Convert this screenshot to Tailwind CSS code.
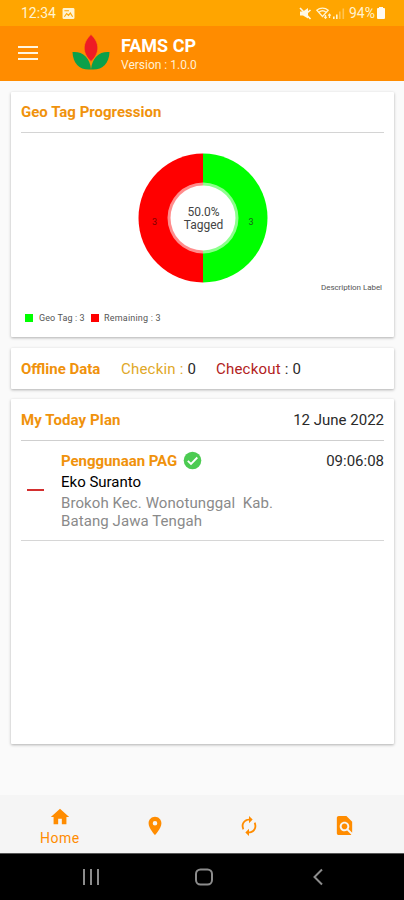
<!DOCTYPE html>
<html lang="en">
<head>
    <meta charset="UTF-8">
    <meta name="viewport" content="width=device-width, initial-scale=1.0">
    <title>FAMS CP</title>
    <script src="https://cdn.jsdelivr.net/npm/@tailwindcss/browser@4"></script>
</head>
<body class="bg-[#fafafa] font-[Roboto,sans-serif] text-[#2a2a2a]">
    <div class="w-[404px] h-[900px] flex flex-col overflow-hidden">
        <!-- Status bar -->
        <div class="h-[26px] shrink-0 bg-[#ffa500] text-[#fff3d0] flex items-center pl-[21px] pr-[19px] text-[14px]">
            <span>12:34</span>
            <svg class="ml-[6px] w-[13px] h-[11px]" viewBox="0 0 13 12" fill="none">
                <rect width="13" height="12" rx="1.5" fill="#fff3d0"/>
                <path d="M2 9.5l2.5-3.5 2 2 2-2.500 2.500 4M2 3h5" stroke="#ffa500" stroke-width="1.200"/>
            </svg>
            <div class="ml-auto flex items-center">
                <svg class="w-[13px] h-[13px]" viewBox="0 0 13 13">
                    <path d="M1 4.500h3l5-3.500v10.500L4 8.500H1z" fill="#fff8e5"/>
                    <path d="M1 1l10.500 11M8.500 5.500l3-2.500" stroke="#fff8e5" stroke-width="1.600"/>
                </svg>
                <svg class="ml-[4px] w-[16px] h-[12px]" viewBox="0 0 16 12" fill="none" stroke="#fff3d0" stroke-width="1.300">
                    <path d="M.8 3.200C4 .3 9 .3 12.200 3.200L6.500 9.500zM3 5.200c2-1.700 5-1.700 7 0M9.500 8v3M8.300 9.800l1.200 1.400 1.200-1.400M13.500 11V7.500M12.300 8.700l1.200-1.400 1.200 1.400"/>
                </svg>
                <svg class="w-[13px] h-[12px]" viewBox="0 0 13 12" fill="#fff3d0">
                    <path d="M1 9.500h1.600V12H1zM4 7.500h1.600V12H4z"/>
                    <path d="M7 4.500h1.600V12H7zM10.500 1.500h1.600V12h-1.600z" opacity=".4"/>
                </svg>
                <span class="ml-[4px]">94%</span>
                <svg class="ml-[2px] w-[8px] h-[12px]" viewBox="0 0 8 12" fill="#fffaf0"><path d="M2 0h4v1H7q1 0 1 1V11q0 1-1 1H1q-1 0-1-1V2q0-1 1-1h1z"/></svg>
            </div>
        </div>

        <!-- App bar -->
        <header class="h-[55px] shrink-0 bg-[#ff8c00] flex items-center text-white">
            <div class="ml-[18px] -mt-[2px] w-[20px] flex flex-col gap-[4px]">
                <span class="h-[2px] bg-[#fff5e0]"></span>
                <span class="h-[2px] bg-[#fff5e0]"></span>
                <span class="h-[2px] bg-[#fff5e0]"></span>
            </div>
            <svg class="ml-[34px] -mt-[3px] w-[38px] h-[36px]" viewBox="0 0 38 36">
                <path d="M.5 18C10 17 18 23 19 35.500C8 36.500 1 30 .5 18z" fill="#0ca04a"/>
                <path d="M37.500 18C28 17 20 23 19 35.500C30 36.500 37 30 37.500 18z" fill="#0ca04a"/>
                <path d="M19 .5C28 9 28 19 19 27.500C10 19 10 9 19 .5z" fill="#ee1c25" stroke="#ff8c00" stroke-width=".6"/>
            </svg>
            <div class="ml-[11px] pt-[2px]">
                <h1 class="text-[18px] leading-[22px] font-bold">FAMS CP</h1>
                <p class="text-[12px] leading-[17px] text-[#fff0d5]">Version : 1.0.0</p>
            </div>
        </header>

        <main class="grow px-[11px] pr-[10px] pt-[11px] flex flex-col gap-[11px]">
            <!-- Progress chart -->
            <section class="h-[245px] bg-white px-[10px] rounded-[1px] shadow-[0_1px_3px_rgba(0,0,0,0.3)]">
                <h2 class="h-[41px] leading-[41px] text-[15px] font-bold text-[#f0920c] border-b border-[#d4d4d4]">Geo Tag Progression</h2>
                <svg class="block mx-auto mt-[20px] w-[130px] h-[130px]" viewBox="0 0 130 130" font-family="Roboto, sans-serif" text-anchor="middle">
                    <path d="M65 .5A64.500 64.500 0 0 0 65 129.500z" fill="#f00"/>
                    <path d="M65 .5A64.500 64.500 0 0 1 65 129.500z" fill="#0f0"/>
                    <circle cx="65" cy="65" r="35.500" fill="#fff" fill-opacity=".55"/>
                    <circle cx="65" cy="65" r="32.500" fill="#fff"/>
                    <text x="65.500" y="62.500" font-size="12" fill="#444">50.0%</text>
                    <text x="65.500" y="76" font-size="12" fill="#444">Tagged</text>
                    <text x="16.500" y="72" font-size="9" fill="#7a0000">3</text>
                    <text x="113" y="72" font-size="9" fill="#186018">3</text>
                </svg>
                <p class="text-right text-[8px] leading-[10px] tracking-[-0.05px] pr-[2px] text-[#555]">Description Label</p>
                <div class="mt-[20px] pl-[4px] flex items-center text-[9px] leading-[10px] text-[#555]">
                    <span class="w-[8px] h-[8px] bg-[#0f0]"></span>
                    <span class="ml-[6px] w-[48px] whitespace-nowrap tracking-[0.1px]">Geo Tag : 3</span>
                    <span class="ml-[4px] w-[8px] h-[8px] bg-[#f00]"></span>
                    <span class="ml-[5px] tracking-[0.2px]">Remaining : 3</span>
                </div>
            </section>

            <section class="h-[41px] pt-[1px] bg-white px-[10px] rounded-[1px] shadow-[0_1px_3px_rgba(0,0,0,0.3)] flex items-center text-[15px]">
                <h2 class="w-[100px] font-bold text-[#f0920c]">Offline Data</h2>
                <p class="w-[95px] tracking-[0.2px]"><span class="text-[#dfa828]">Checkin :</span> 0</p>
                <p class="tracking-[0.2px]"><span class="text-[#b22222]">Checkout</span> : 0</p>
            </section>

            <!-- Today plan -->
            <section class="-mt-[1px] h-[345px] bg-white px-[10px] rounded-[1px] shadow-[0_1px_3px_rgba(0,0,0,0.3)] text-[15px]">
                <div class="h-[42px] pt-[1px] flex items-center justify-between border-b border-[#cfcfcf]">
                    <h2 class="font-bold tracking-[0.1px] text-[#f0920c]">My Today Plan</h2>
                    <span>12 June 2022</span>
                </div>
                <div class="h-[100px] flex items-start border-b border-[#d6d6d6]">
                    <span class="mt-[48px] ml-[6px] w-[17px] h-[2px] bg-[#d32f2f]"></span>
                    <div class="ml-[17px] pt-[9px]">
                        <div class="h-[22px] flex items-center gap-[6px]">
                            <h3 class="font-bold tracking-[-0.05px] text-[#f0920c]">Penggunaan PAG</h3>
                            <svg class="-mt-[2px] w-[19px] h-[19px]" viewBox="0 0 19 19" fill="none">
                                <circle cx="9.500" cy="9.500" r="8.800" fill="#4ccb52"/>
                                <path d="M4.800 9.800l3.200 3.200 6.300-6.500" stroke="#fff" stroke-width="1.800"/>
                            </svg>
                        </div>
                        <p class="leading-[20px] text-black">Eko Suranto</p>
                        <p class="mt-[2px] leading-[18px] tracking-[0.08px] text-[#8a8a8a] whitespace-pre">Brokoh Kec. Wonotunggal  Kab.
Batang Jawa Tengah</p>
                    </div>
                    <span class="ml-auto mt-[9px] leading-[22px]">09:06:08</span>
                </div>
            </section>
        </main>

        <!-- Bottom navigation -->
        <nav class="h-[58px] shrink-0 bg-[#f5f5f5] px-[12.500px] grid grid-cols-4 text-[#ff8c00]">
            <div class="flex flex-col items-center pt-[11px]">
                <svg class="w-[22px] h-[22px]" viewBox="0 0 24 24" fill="currentColor"><path d="M10 20v-6h4v6h5v-8h3L12 3 2 12h3v8z"/></svg>
                <span class="mt-[1px] text-[14px] leading-[18px] tracking-[0.5px]">Home</span>
            </div>
            <div class="flex items-center justify-center pt-[3px]">
                <svg class="w-[22px] h-[22px]" viewBox="0 0 24 24" fill="currentColor"><path d="M12 2C8.130 2 5 5.130 5 9c0 5.250 7 13 7 13s7-7.750 7-13c0-3.870-3.130-7-7-7zm0 9.500a2.500 2.500 0 1 1 0-5 2.500 2.500 0 0 1 0 5z"/></svg>
            </div>
            <div class="flex items-center justify-center pt-[3px]">
                <svg class="w-[22px] h-[22px]" viewBox="0 0 24 24" fill="currentColor"><path d="M12 6v3l4-4-4-4v3c-4.420 0-8 3.580-8 8 0 1.570.46 3.030 1.240 4.260L6.700 14.800c-.45-.83-.7-1.790-.7-2.800 0-3.310 2.690-6 6-6zm6.760 1.740L17.300 9.200c.44.84.7 1.790.7 2.800 0 3.310-2.690 6-6 6v-3l-4 4 4 4v-3c4.420 0 8-3.580 8-8 0-1.570-.46-3.030-1.240-4.260z"/></svg>
            </div>
            <div class="flex items-center justify-center pt-[3px]">
                <svg class="w-[23px] h-[23px]" viewBox="0 0 24 24" fill="currentColor"><path d="M20 19.590V8l-6-6H6c-1.100 0-1.990.9-1.990 2L4 20c0 1.100.89 2 1.990 2H18c.45 0 .85-.15 1.190-.4l-4.430-4.430c-.8.52-1.740.83-2.760.83-2.760 0-5-2.240-5-5s2.240-5 5-5 5 2.240 5 5c0 1.020-.31 1.960-.83 2.750L20 19.590zM9 13c0 1.660 1.340 3 3 3s3-1.340 3-3-1.340-3-3-3-3 1.340-3 3z"/></svg>
            </div>
        </nav>

        <!-- System navigation -->
        <div class="h-[47px] shrink-0 bg-black border-t border-[#555] flex items-center text-[#8c8c8c]">
            <svg class="ml-[82px] w-[18px] h-[18px]" viewBox="0 0 18 18" fill="currentColor"><path d="M1 1h2v16H1zM8 1h2v16H8zM15 1h2v16h-2z"/></svg>
            <svg class="ml-[95px] w-[18px] h-[18px]" viewBox="0 0 18 18" fill="none" stroke="currentColor" stroke-width="2"><rect x="1" y="1.500" width="16" height="15" rx="4.500"/></svg>
            <svg class="ml-[99px] w-[18px] h-[18px]" viewBox="0 0 18 18" fill="none" stroke="currentColor" stroke-width="2"><path d="M10 1.500L2.500 9l7.500 7.500"/></svg>
        </div>
    </div>
</body>
</html>
